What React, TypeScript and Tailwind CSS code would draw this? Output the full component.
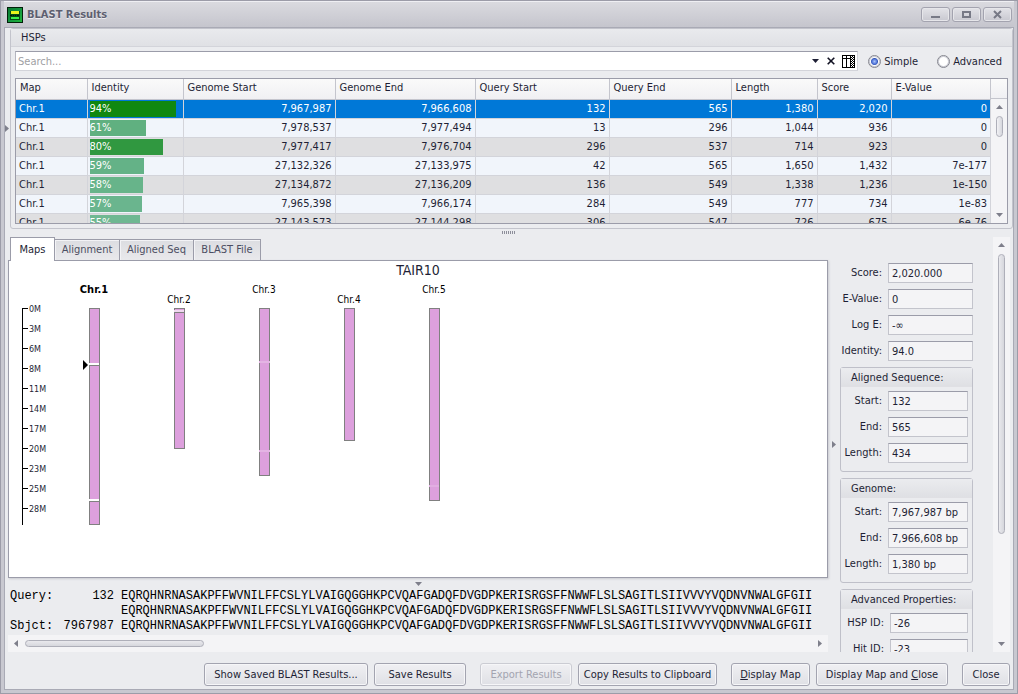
import type { ReactNode } from 'react';

type Hsp = {
  map: string;
  identity: number;
  barColor: string;
  values: string[];
};

const columns = [
  { label: 'Map', width: 'w-[71px]' },
  { label: 'Identity', width: 'w-24' },
  { label: 'Genome Start', width: 'w-[152px]' },
  { label: 'Genome End', width: 'w-[140px]' },
  { label: 'Query Start', width: 'w-[134px]' },
  { label: 'Query End', width: 'w-[122px]' },
  { label: 'Length', width: 'w-[86px]' },
  { label: 'Score', width: 'w-[74px]' },
  { label: 'E-Value', width: '' },
];

const hsps: Hsp[] = [
  { map: 'Chr.1', identity: 94, barColor: '#108810', values: ['7,967,987', '7,966,608', '132', '565', '1,380', '2,020', '0'] },
  { map: 'Chr.1', identity: 61, barColor: '#60b080', values: ['7,978,537', '7,977,494', '13', '296', '1,044', '936', '0'] },
  { map: 'Chr.1', identity: 80, barColor: '#309840', values: ['7,977,417', '7,976,704', '296', '537', '714', '923', '0'] },
  { map: 'Chr.1', identity: 59, barColor: '#64b287', values: ['27,132,326', '27,133,975', '42', '565', '1,650', '1,432', '7e-177'] },
  { map: 'Chr.1', identity: 58, barColor: '#67b48a', values: ['27,134,872', '27,136,209', '136', '549', '1,338', '1,236', '1e-150'] },
  { map: 'Chr.1', identity: 57, barColor: '#6ab58e', values: ['7,965,398', '7,966,174', '284', '549', '777', '734', '1e-83'] },
  { map: 'Chr.1', identity: 55, barColor: '#6fb892', values: ['27,143,573', '27,144,298', '306', '547', '726', '675', '6e-76'] },
];

const sequence =
  'EQRQHNRNASAKPFFWVNILFFCSLYLVAIGQGGHKPCVQAFGADQFDVGDPKERISRGSFFNWWFLSLSAGITLSIIVVVYVQDNVNWALGFGII';

const alignment = [
  { label: 'Query:', start: '132' },
  { label: '', start: '' },
  { label: 'Sbjct:', start: '7967987' },
];

function Triangle({ dir, className = 'fill-[#7e7f8b]' }: { dir: 'up' | 'down' | 'left' | 'right'; className?: string }) {
  const shapes = {
    up: { w: 7, h: 4, d: 'M0 4 L3.5 0 L7 4Z' },
    down: { w: 7, h: 4, d: 'M0 0 L3.5 4 L7 0Z' },
    left: { w: 4, h: 7, d: 'M4 0 L0 3.5 L4 7Z' },
    right: { w: 4, h: 7, d: 'M0 0 L4 3.5 L0 7Z' },
  };
  const s = shapes[dir];
  return (
    <svg width={s.w} height={s.h} className={className} aria-hidden="true">
      <path d={s.d} />
    </svg>
  );
}

function AppIcon() {
  return (
    <svg width="16" height="16" aria-hidden="true" shapeRendering="crispEdges">
      <defs>
        <linearGradient id="appGreen" x1="0" y1="0" x2="1" y2="1">
          <stop offset="0" stopColor="#0a7a30" />
          <stop offset="0.5" stopColor="#14963f" />
          <stop offset="1" stopColor="#1fb53a" />
        </linearGradient>
      </defs>
      <rect width="16" height="16" fill="#02200a" />
      <rect x="1" y="1" width="14" height="14" fill="url(#appGreen)" />
      <rect x="3" y="4" width="10" height="9" fill="#064a17" />
      <rect x="4" y="4" width="8" height="3" fill="#e8f51c" />
      <path d="M3 8.500h2M6 8.500h1M8 8.500h1M10 8.500h2" stroke="#021a06" />
      <rect x="4" y="10" width="8" height="2" fill="#3df04b" />
    </svg>
  );
}

function WindowButton({ label, children }: { label: string; children: ReactNode }) {
  return (
    <button
      aria-label={label}
      className="flex h-[15px] w-[29px] items-center justify-center rounded-[3px] border border-[#a3a3af] bg-linear-to-b from-[#e3e3e8] to-[#c8c8d0] shadow-[inset_0_0_0_1px_#e6e6ea]"
    >
      <svg width="11" height="9" aria-hidden="true">
        {children}
      </svg>
    </button>
  );
}

function TitleBar() {
  return (
    <header className="flex h-[26px] shrink-0 items-center bg-linear-to-b from-[#dbdbe0] to-[#c5c5cd] pt-px pr-0.5 pl-[3px] shadow-[inset_0_1px_0_#efeff3]">
      <AppIcon />
      <h1 className="ml-1 flex-1 font-bold text-[#5d5f70] [text-shadow:0_1px_0_#eeeef2]">BLAST Results</h1>
      <div className="flex gap-0.5">
        <WindowButton label="Minimize">
          <rect x="1" y="6" width="9" height="2" fill="#777986" />
        </WindowButton>
        <WindowButton label="Maximize">
          <rect x="2" y="2" width="7" height="5" fill="none" stroke="#777986" strokeWidth="2" />
        </WindowButton>
        <WindowButton label="Close window">
          <path d="M2 1l7 7M9 1l-7 7" stroke="#777986" strokeWidth="2" />
        </WindowButton>
      </div>
    </header>
  );
}

function SearchRow() {
  return (
    <div className="flex h-5 shrink-0 items-center">
      <div className="flex h-5 flex-1 items-center border border-[#d3d4da] border-t-[#9b9ca9] border-l-[#b5b6c0] bg-white pr-0.5">
        <input
          aria-label="Search"
          placeholder="Search..."
          className="h-full min-w-0 flex-1 bg-transparent px-0.5 outline-none placeholder:text-[#a0a0a4]"
        />
        <button aria-label="Search history" className="flex w-4 items-center justify-center">
          <Triangle dir="down" className="fill-[#1e1f35]" />
        </button>
        <button aria-label="Clear search" className="flex w-4 items-center justify-center">
          <svg width="8" height="8" aria-hidden="true">
            <path d="M.7 .7l6.600 6.600M7.300 .7L.7 7.300" stroke="#111122" strokeWidth="1.6" />
          </svg>
        </button>
        <button aria-label="Choose columns" className="ml-0.5 flex w-[14px] items-center justify-center">
          <svg width="13" height="13" shapeRendering="crispEdges" aria-hidden="true">
            <rect x=".5" y=".5" width="12" height="12" fill="#fff" stroke="#000" />
            <path d="M4.500 0v13M8.500 0v13M0 3.500h9" stroke="#000" />
            <path
              d="M10 1.500h1M12 1.500h1M9 2.500h1M11 2.500h1M10 3.500h1M12 3.500h1M9 4.500h1M11 4.500h1M10 5.500h1M12 5.500h1M9 6.500h1M11 6.500h1M10 7.500h1M12 7.500h1M9 8.500h1M11 8.500h1M10 9.500h1M12 9.500h1M9 10.500h1M11 10.500h1M10 11.500h1"
              stroke="#000"
            />
          </svg>
        </button>
      </div>
      <fieldset className="ml-2.5 flex items-center gap-[19px] pt-px pr-1.5">
        <Radio label="Simple" checked />
        <Radio label="Advanced" />
      </fieldset>
    </div>
  );
}

function Radio({ label, checked = false }: { label: string; checked?: boolean }) {
  return (
    <label className="flex items-center gap-[3px]">
      <input
        type="radio"
        name="search-mode"
        defaultChecked={checked}
        className="size-[13px] appearance-none rounded-full border border-[#85868f] bg-white shadow-[inset_0_0_0_1px_#c9cad2] checked:bg-[radial-gradient(circle_at_50%_50%,#a9c3fa_0,#3d63cf_3px,#3556b5_3px,#fff_4px)]"
      />
      {label}
    </label>
  );
}

function HspTable() {
  return (
    <div className="flex h-[146px] shrink-0 border border-[#9b9ca9] bg-[#f4f4f6]">
      <div className="min-w-0 flex-1 overflow-hidden">
        <table className="w-full table-fixed border-collapse">
          <thead>
            <tr className="h-5 bg-linear-to-b from-[#fafafa] to-[#f0f0f3]">
              {columns.map((c) => (
                <th
                  key={c.label}
                  className={`${c.width} h-5 border-r border-b border-[#c4c5cd] p-0 pb-0.5 pl-1 text-left font-normal`}
                >
                  {c.label}
                </th>
              ))}
            </tr>
          </thead>
          <tbody>
            {hsps.map((row, i) => (
              <tr
                key={row.values[0]}
                className={i === 0 ? 'bg-[#0078d7] text-white' : i % 2 ? 'bg-[#f1f5fb]' : 'bg-[#dfdfe1]'}
              >
                <td className="h-[19px] border-r border-b border-[#d3d4da] p-0 pl-[3px]">{row.map}</td>
                <td className="h-[19px] border-r border-b border-[#d3d4da] p-0 pl-0.5">
                  <div className="h-4 w-[92px]">
                    <div
                      className="h-4 leading-4 text-white"
                      style={{ width: `${row.identity}%`, backgroundColor: row.barColor }}
                    >
                      {row.identity}%
                    </div>
                  </div>
                </td>
                {row.values.map((v, j) => (
                  <td key={j} className="h-[19px] border-r border-b border-[#d3d4da] p-0 pr-[3px] text-right">
                    {v}
                  </td>
                ))}
              </tr>
            ))}
          </tbody>
        </table>
      </div>
      <div className="flex w-4 flex-col">
        <div className="h-5 border-b border-[#c4c5cd] bg-linear-to-b from-[#fafafa] to-[#f0f0f3]" />
        <div className="flex flex-1 flex-col items-center pt-1.5 pb-1.5">
          <button aria-label="Scroll results up" className="flex h-[11px] items-start">
            <Triangle dir="up" />
          </button>
          <div className="h-[21px] w-[7px] rounded-full border border-[#aeafb9] bg-linear-to-r from-[#f2f2f5] to-[#d6d7dd]" />
          <button aria-label="Scroll results down" className="mt-auto flex items-end">
            <Triangle dir="down" />
          </button>
        </div>
      </div>
    </div>
  );
}

const chromosomes = [
  { name: 'Chr.1', x: 94, y: 293, length: 216, bold: true },
  { name: 'Chr.2', x: 179, y: 303, length: 140, bold: false },
  { name: 'Chr.3', x: 264, y: 293, length: 167, bold: false },
  { name: 'Chr.4', x: 349, y: 303, length: 132, bold: false },
  { name: 'Chr.5', x: 434, y: 293, length: 192, bold: false },
];

const ticks = ['0M', '3M', '6M', '8M', '11M', '14M', '17M', '20M', '23M', '25M', '28M'];

function GenomeMap() {
  return (
    <div
      role="tabpanel"
      className="min-h-0 flex-1 border border-[#9b9ca9] bg-white shadow-[1px_1px_2px_#c9cad0]"
    >
      <svg className="block h-full w-full" role="img" aria-label="Hits on the chromosomes of TAIR10">
        <text x="50%" y="14" textAnchor="middle" className="fill-[#1e1f35] text-[14px]">
          TAIR10
        </text>
        <g transform="translate(-9 -261)">
          <path d="M22.500 308v217" stroke="#000" />
          {ticks.map((t, i) => (
            <g key={t}>
              <path d={`M23 ${308.5 + i * 20}h5`} stroke="#000" />
              <text x="29" y={312 + i * 20} className="fill-[#1e1f35] font-['DejaVu_Sans'] text-[8px]">
                {t}
              </text>
            </g>
          ))}
          {chromosomes.map((c) => (
            <g key={c.name}>
              <text
                x={c.x}
                y={c.y}
                textAnchor="middle"
                className={
                  c.bold
                    ? "fill-black font-['DejaVu_Sans_Condensed'] text-[11px] font-bold"
                    : "fill-black font-['DejaVu_Sans_Condensed'] text-[10px]"
                }
              >
                {c.name}
              </text>
              <rect x={c.x - 4.5} y="308.5" width="10" height={c.length} fill="#dda0dd" stroke="#808080" />
            </g>
          ))}
          <path d="M89 364h10M89 500h10" stroke="#fff" strokeWidth="2" />
          <path d="M89 365.500h11M89 501.500h11" stroke="#808080" />
          <path d="M174 311h10" stroke="#f0d8f0" strokeWidth="2" />
          <path d="M174 312.500h11" stroke="#808080" />
          <path d="M259 362h11M259 451h11" stroke="#e4b4e4" strokeWidth="2" />
          <path d="M429 486h10" stroke="#e2aee2" strokeWidth="2" />
          <path d="M83 360l5 5l-5 5z" fill="#000" />
        </g>
      </svg>
    </div>
  );
}

function AlignmentView() {
  return (
    <div className="shrink-0">
      <div className="overflow-hidden font-['Liberation_Mono','Courier_New',monospace] text-[12px] leading-[15px] text-black">
        {alignment.map((line, i) => (
          <div key={i} className="flex whitespace-pre pl-0.5">
            <span className="w-[45px] shrink-0">{line.label}</span>
            <span className="w-[59px] shrink-0 text-right">{line.start}</span>
            <span className="ml-[7px]">{sequence}</span>
          </div>
        ))}
      </div>
      <div className="mt-px flex h-[17px] items-center bg-[#f4f4f6] px-1.5">
        <button aria-label="Scroll alignment left">
          <Triangle dir="left" />
        </button>
        <div className="ml-[7px] h-[7px] w-[179px] rounded-full border border-[#aeafb9] bg-linear-to-b from-[#e9e9ed] to-[#d6d7dd]" />
        <button aria-label="Scroll alignment right" className="ml-auto">
          <Triangle dir="right" />
        </button>
      </div>
    </div>
  );
}

function Tabs() {
  return (
    <div role="tablist" className="z-10 -mb-px flex shrink-0 items-end pl-0.5">
      <button
        role="tab"
        aria-selected="true"
        className="h-6 w-[45px] border border-b-0 border-[#9b9ca9] bg-white"
      >
        Maps
      </button>
      {[
        { label: 'Alignment', width: 'w-[65px]' },
        { label: 'Aligned Seq', width: 'w-[74px]' },
        { label: 'BLAST File', width: 'w-[67px]' },
      ].map((t) => (
        <button
          key={t.label}
          role="tab"
          aria-selected="false"
          className={`${t.width} h-[22px] border border-l-0 border-[#9b9ca9] bg-linear-to-b from-[#dcdde1] to-[#e9e9ec] text-[#4c4e62] shadow-[inset_1px_1px_0_#f3f3f6]`}
        >
          {t.label}
        </button>
      ))}
    </div>
  );
}

const fieldSizes = {
  wide: { row: '', input: 'w-[85px]' },
  grouped: { row: 'pr-1', input: 'w-20' },
  narrow: { row: 'pr-1', input: 'w-[78px]' },
};

function Field({
  id,
  label,
  value,
  size = 'wide',
}: {
  id: string;
  label: string;
  value: string;
  size?: keyof typeof fieldSizes;
}) {
  return (
    <div className={`flex items-center ${fieldSizes[size].row}`}>
      <label htmlFor={id} className="flex-1 text-right whitespace-nowrap">
        {label}
      </label>
      <input
        id={id}
        readOnly
        defaultValue={value}
        className={`${fieldSizes[size].input} ml-1.5 h-5 shrink-0 border border-[#c3c4cc] border-t-[#9b9ca9] bg-[#f4f4f6] px-[3px] outline-none`}
      />
    </div>
  );
}

function Group({ title, children }: { title: string; children: ReactNode }) {
  return (
    <section className="ml-0.5 rounded-[3px] border border-[#bfc0c9] pb-2 shadow-[inset_0_1px_0_#f6f6f9]">
      <h2 className="mb-1 h-[19px] border-b border-[#e0e0e4] bg-linear-to-b from-[#ebecef] to-[#dfe0e4] pl-2.5 leading-[19px]">
        {title}
      </h2>
      <div className="-ml-1 flex flex-col gap-1.5">{children}</div>
    </section>
  );
}

function Properties() {
  return (
    <aside className="flex w-[185px] shrink-0 overflow-hidden">
      <div className="flex w-2.5 items-center pl-1">
        <Triangle dir="right" />
      </div>
      <div className="flex w-[135px] flex-col gap-1.5 overflow-hidden pt-[26px]">
        <Field id="score" label="Score:" value="2,020.000" />
        <Field id="evalue" label="E-Value:" value="0" />
        <Field id="loge" label="Log E:" value="-∞" />
        <Field id="identity" label="Identity:" value="94.0" />
        <Group title="Aligned Sequence:">
          <Field id="seq-start" label="Start:" value="132" size="grouped" />
          <Field id="seq-end" label="End:" value="565" size="grouped" />
          <Field id="seq-length" label="Length:" value="434" size="grouped" />
        </Group>
        <Group title="Genome:">
          <Field id="gen-start" label="Start:" value="7,967,987 bp" size="grouped" />
          <Field id="gen-end" label="End:" value="7,966,608 bp" size="grouped" />
          <Field id="gen-length" label="Length:" value="1,380 bp" size="grouped" />
        </Group>
        <Group title="Advanced Properties:">
          <Field id="hsp-id" label="HSP ID:" value="-26" size="narrow" />
          <Field id="hit-id" label="Hit ID:" value="-23" size="narrow" />
        </Group>
      </div>
      <div className="ml-5 flex w-[17px] flex-col items-center bg-[#f4f4f6] py-1.5">
        <button aria-label="Scroll properties up" className="flex h-[11px] items-start">
          <Triangle dir="up" />
        </button>
        <div className="h-[280px] w-[7px] rounded-full border border-[#aeafb9] bg-linear-to-r from-[#e9e9ed] to-[#d6d7dd]" />
        <button aria-label="Scroll properties down" className="mt-auto">
          <Triangle dir="down" />
        </button>
      </div>
    </aside>
  );
}

function ActionButton({ children, width, disabled = false }: { children: ReactNode; width: string; disabled?: boolean }) {
  return (
    <button
      disabled={disabled}
      className={`${width} h-[23px] rounded-[3px] border border-[#a3a4b0] bg-linear-to-b from-[#f0f0f3] to-[#dfe0e5] whitespace-nowrap shadow-[inset_0_0_0_1px_#f6f6f8] disabled:border-[#cbccd3] disabled:text-[#a3a4b0]`}
    >
      {children}
    </button>
  );
}

function ActionBar() {
  return (
    <footer className="mt-[11px] flex shrink-0 justify-end pr-[3px]">
      <ActionButton width="w-[164px]">Show Saved BLAST Results...</ActionButton>
      <div className="ml-1.5 flex gap-3.5">
        <ActionButton width="w-[92px]">Save Results</ActionButton>
        <ActionButton width="w-[92px]" disabled>
          Export Results
        </ActionButton>
      </div>
      <div className="ml-1.5 flex gap-3.5">
        <ActionButton width="w-[139px]">Copy Results to Clipboard</ActionButton>
        <ActionButton width="w-[79px]">
          <u>D</u>isplay Map
        </ActionButton>
      </div>
      <div className="ml-1.5 flex gap-3.5">
        <ActionButton width="w-[132px]">
          Display Map and <u>C</u>lose
        </ActionButton>
        <ActionButton width="w-12">Close</ActionButton>
      </div>
    </footer>
  );
}

export default function App() {
  return (
    <div className="flex h-screen flex-col border border-[#9c9ca8] bg-[#c8c8d0] px-[3px] pb-[3px] font-['DejaVu_Sans_Condensed','DejaVu_Sans',sans-serif] text-[11px] leading-[14px] text-[#1e1f35]">
      <TitleBar />
      <main className="flex min-h-0 flex-1 flex-col border border-[#a9aab5] bg-[#ebecef] pb-[3px]">
        <div className="flex shrink-0">
          <div className="flex w-[5px] items-center">
            <Triangle dir="right" />
          </div>
          <section className="min-w-0 flex-1 rounded-[3px] border border-[#c3c4cc]">
            <h2 className="h-[18px] border-b border-[#d3d4da] bg-linear-to-b from-[#e9eaed] to-[#e0e1e5] pl-2.5 leading-[18px]">
              HSPs
            </h2>
            <div className="flex flex-col gap-[7px] px-1 pt-1 pb-1">
              <SearchRow />
              <HspTable />
            </div>
          </section>
        </div>
        <div className="flex h-2 shrink-0 items-start justify-center pt-0.5">
          <svg width="14" height="3" aria-hidden="true">
            <path d="M0 1.500h14" stroke="#8d8e9a" strokeWidth="3" strokeDasharray="1 1" />
          </svg>
        </div>
        <div className="flex min-h-0 flex-1 pl-[3px]">
          <div className="flex min-w-0 flex-1 flex-col">
            <Tabs />
            <GenomeMap />
            <div className="flex h-[11px] shrink-0 items-start justify-center pt-1">
              <Triangle dir="down" />
            </div>
            <AlignmentView />
          </div>
          <Properties />
        </div>
        <ActionBar />
      </main>
    </div>
  );
}
